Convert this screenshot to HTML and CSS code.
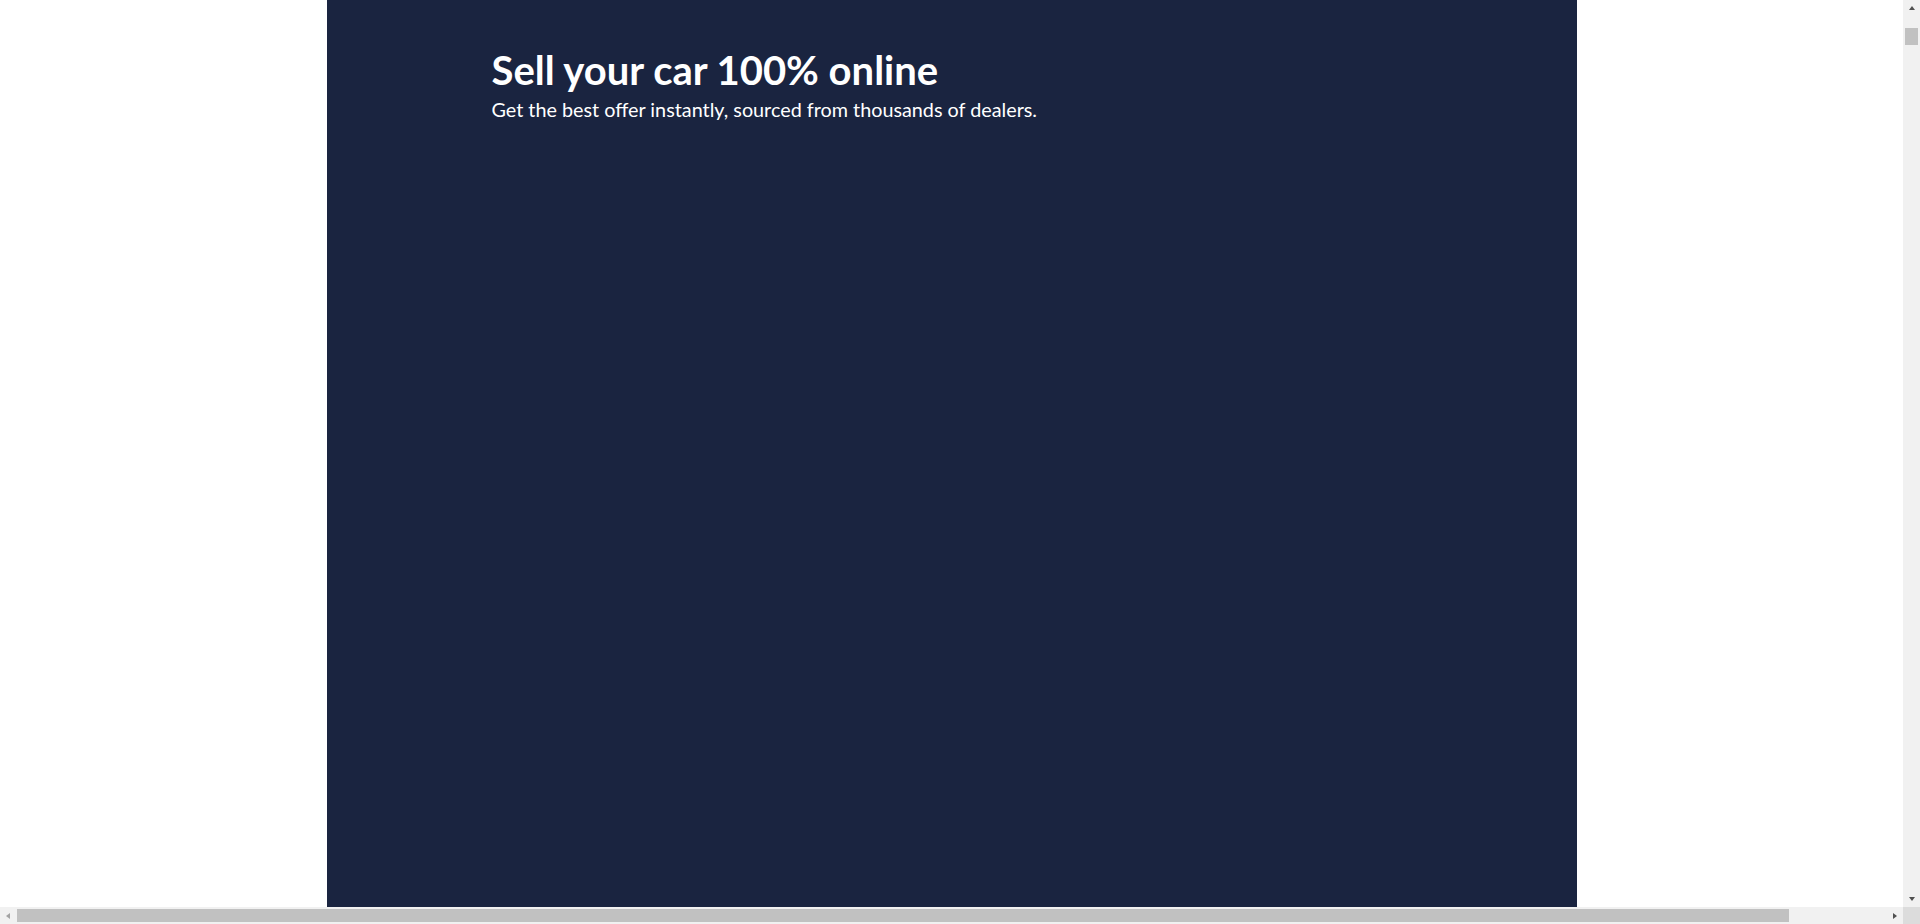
FILE: index.html
```html
<!DOCTYPE html>
<html lang="en">
<head>
<meta charset="utf-8">
<title>Sell your car 100% online</title>
<link rel="stylesheet" href="styles.css">
</head>
<body>
<div class="window">
  <div class="content">
    <main class="hero">
      <div class="hero-inner">
        <h1 class="hero-title">Sell your car 100% online</h1>
        <p class="hero-sub">Get the best offer instantly, sourced from thousands of dealers.</p>
      </div>
    </main>
  </div>
  <div class="vbar">
    <div class="sb-btn"><span class="arrow arrow-up"></span></div>
    <div class="vtrack"><div class="vthumb"></div></div>
    <div class="sb-btn"><span class="arrow arrow-down"></span></div>
  </div>
  <div class="hbar">
    <div class="sb-btn"><span class="arrow arrow-left"></span></div>
    <div class="htrack"><div class="hthumb"></div></div>
    <div class="sb-btn"><span class="arrow arrow-right"></span></div>
  </div>
  <div class="sb-corner"></div>
</div>
</body>
</html>
```
FILE: styles.css
```css
html, body {
  margin: 0;
  padding: 0;
  background: #ffffff;
  overflow: hidden;
  height: 100%;
}
body {
  font-family: Lato, "Open Sans", sans-serif;
}
.window {
  display: grid;
  grid-template-columns: 1fr 17px;
  grid-template-rows: 1fr 17px;
  width: 100vw;
  height: 100vh;
}
.content {
  overflow: hidden;
  min-width: 0;
  min-height: 0;
}
.hero {
  width: 1250px;
  margin: 0 auto;
  background: #1a2440;
  min-height: 46000px;
  box-sizing: border-box;
  padding: 46px 0 0 165px;
}
.hero-inner {
  display: flex;
  flex-direction: column;
  gap: 1px;
}
.hero-title {
  margin: 0;
  color: #ffffff;
  font-size: 40px;
  font-weight: 700;
  line-height: 48px;
}
.hero-sub {
  margin: 0;
  color: #ffffff;
  font-size: 19.8px;
  font-weight: 400;
  line-height: 28px;
}

/* scrollbars */
.vbar {
  display: flex;
  flex-direction: column;
  background: #f1f1f1;
}
.hbar {
  display: flex;
  background: #f1f1f1;
}
.sb-btn {
  flex: 0 0 17px;
  width: 17px;
  height: 17px;
  display: flex;
  align-items: center;
  justify-content: center;
}
.vtrack {
  flex: 1;
  padding: 11px 2px 0;
}
.vthumb {
  height: 17px;
  background: #c1c1c1;
}
.htrack {
  flex: 1;
  padding: 2px 0;
}
.hthumb {
  width: 1772px;
  height: 13px;
  background: #c1c1c1;
}
.sb-corner {
  background: #dcdcdc;
}
.arrow {
  width: 0;
  height: 0;
  display: block;
}
.arrow-up {
  border-left: 3.5px solid transparent;
  border-right: 3.5px solid transparent;
  border-bottom: 4px solid #505050;
  margin-top: -2px;
}
.arrow-down {
  border-left: 3.5px solid transparent;
  border-right: 3.5px solid transparent;
  border-top: 4px solid #505050;
  margin-bottom: -1px;
}
.arrow-left {
  border-top: 3.5px solid transparent;
  border-bottom: 3.5px solid transparent;
  border-right: 4px solid #a3a3a3;
  margin-left: -1px;
}
.arrow-right {
  border-top: 3.5px solid transparent;
  border-bottom: 3.5px solid transparent;
  border-left: 4px solid #505050;
  margin-left: 1px;
}
```
